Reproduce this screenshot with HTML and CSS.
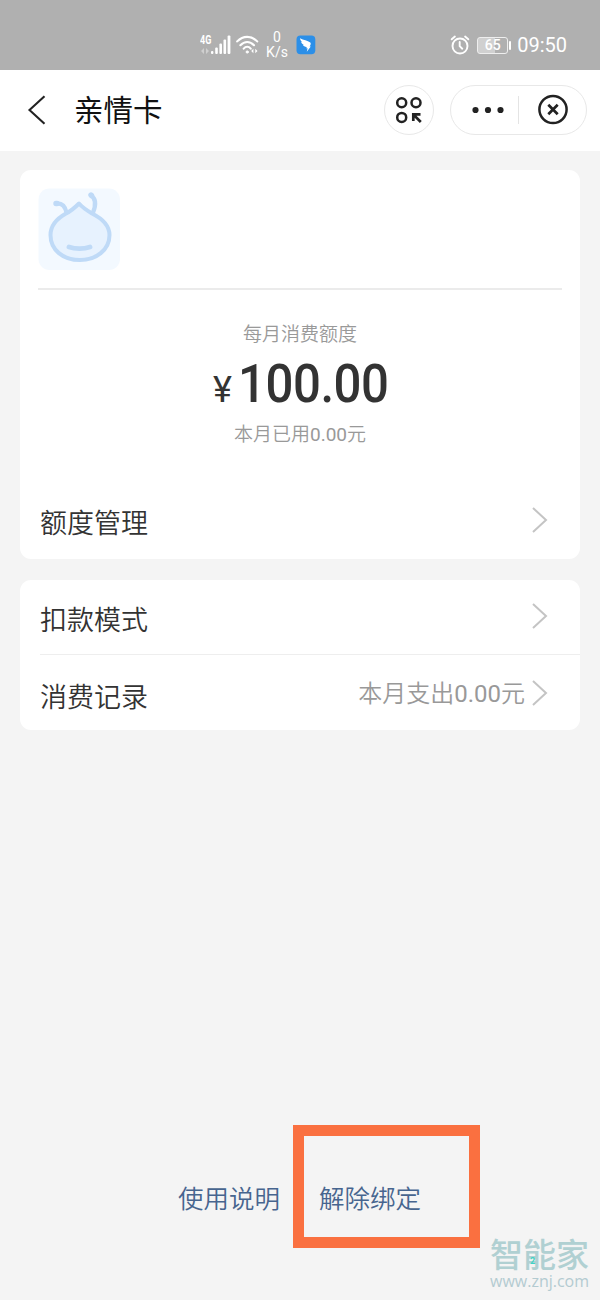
FILE: index.html
```html
<!DOCTYPE html>
<html lang="zh-CN">
<head>
<meta charset="utf-8">
<title>亲情卡</title>
<link rel="stylesheet" href="styles.css">
</head>
<body>
<div class="screen">
  <div class="status">
    <div class="status-left">
      <div class="network">
        <span class="gen">4G</span>
        <svg class="signal" width="31" height="20" viewBox="0 0 31 20" fill="#fff"><path opacity=".4" d="M1 16l3-3v6zM9 16l-3-3v6z"/><rect x="11" y="16" width="2.4" height="3" rx="1"/><rect x="15.2" y="12.5" width="2.6" height="6.5" rx="1"/><rect x="19.4" y="8.5" width="2.6" height="10.5" rx="1"/><rect x="23.5" y="4.5" width="2.6" height="14.5" rx="1"/><rect x="27.6" y="0.5" width="2.8" height="18.5" rx="1"/></svg>
      </div>
      <svg class="wifi" width="23" height="20" viewBox="0 0 23 20" fill="none" stroke="#fff" stroke-width="2.1" stroke-linecap="round"><path d="M1.2 6.4C7 .3 15.500 .3 21.200 6.400M4.400 10.200C8.500 5.900 14 5.900 18 10.200M7.700 13.600C9.800 11.200 12.600 11.200 14.700 13.600"/><circle cx="11.200" cy="17" r="1.100" fill="#fff" stroke-width="1"/><path d="M17.400 13.800v4.500l-2.200-2.200zM19.300 13.800v4.500l2.200-2.200z" fill="#fff" stroke="none"/></svg>
      <div class="speed"><span>0</span><span>K/s</span></div>
      <svg class="bird" width="20" height="20" viewBox="0 0 20 20"><rect x=".5" y=".5" width="18.800" height="18.800" rx="4" fill="#2c8fe8"/><path d="M4 3.200c3.500 1.800 7.500 2.200 10.300 4.200 1 1 .1 2.700-.7 4h1.200l-4 5.300.8-3.500h-1.500l.8-1.200c-2 .1-3.400-.8-4-2.200l1.200.1C6.200 9 5.300 8 5.200 6.700l1 .2C4.800 5.900 4.100 4.700 4 3.200z" fill="#fff"/></svg>
    </div>
    <div class="status-right">
      <svg width="20" height="20" viewBox="0 0 20 20" fill="none" stroke="#fff" stroke-width="1.900" stroke-linecap="round"><circle cx="10" cy="11" r="7.500"/><path d="M9.700 7v4.200l2.600 2.500M1.700 4.300l3.200-2.700M18.300 4.300l-3.200-2.700"/></svg>
      <div class="battery"><div class="cell">65</div><div class="tip"></div></div>
      <span class="time">09:50</span>
    </div>
  </div>

  <header class="nav">
    <svg class="back" width="20" height="32" viewBox="0 0 20 32" fill="none" stroke="#222" stroke-width="2.100"><path d="M18.500 2.200L3.500 16L18.500 29.800"/></svg>
    <h1>亲情卡</h1>
    <div class="round"><svg width="28" height="28" viewBox="0 0 28 28" fill="none" stroke="#222" stroke-width="2.500"><circle cx="6.700" cy="6.700" r="4.500"/><circle cx="21" cy="6.700" r="4.500"/><circle cx="6.700" cy="21.400" r="4.500"/><path stroke-width="2.700" d="M18.300 25V18.400H25.500M18.500 18.600L25.800 26"/></svg></div>
    <div class="capsule">
      <svg class="dots" width="34" height="8" viewBox="0 0 34 8" fill="#222"><circle cx="4.500" cy="4" r="3.100"/><circle cx="17" cy="4" r="3.100"/><circle cx="29.500" cy="4" r="3.100"/></svg>
      <i class="split"></i>
      <svg class="close" width="32" height="32" viewBox="0 0 32 32" fill="none" stroke="#222" stroke-width="2.500"><circle cx="16" cy="15.500" r="13.600"/><path stroke-width="2.700" d="M11.300 10.800l9.400 9.400M20.700 10.800l-9.400 9.400"/></svg>
    </div>
  </header>

  <main>
    <section class="card quota">
      <div class="owner">
        <svg width="82" height="82" viewBox="0 0 82 82" fill="none" stroke="#bfdaf7" stroke-linecap="round" stroke-linejoin="round"><rect x=".5" y=".5" width="81.500" height="81.500" rx="11" fill="#f3f9ff" stroke="none"/><path d="M41 15.500C45 20 49 22.500 54 25.500C65 31 71.500 38 71.500 47C71.500 62 58 72 42 72C25 72 12.500 62 12.500 47C12.500 37 19 30.500 28 25.500C33 23 37 19.500 41 15.500Z" fill="#e7f2fe" stroke-width="4"/><path d="M28.500 24.500C27 18 23.500 15 18.500 15.500" stroke-width="4.300"/><path d="M55 24.500C58 17 58 10.500 53 7.500" stroke-width="4.300"/><path d="M31 59C37 61 46 61 52 59" stroke-width="4.800"/><path d="M18 15.500h1M53 7l.5.500" stroke-width="5.400"/></svg>
      </div>
      <div class="summary">
        <div class="caption">每月消费额度</div>
        <div class="amount"><span class="yen">¥</span><span class="figure">100.00</span></div>
        <div class="caption used">本月已用<span class="num">0.00</span>元</div>
      </div>
      <div class="row">
        <span class="label">额度管理</span>
        <svg class="chevron" width="18" height="28" viewBox="0 0 18 28"><path d="M2 2L15 14L2 26"/></svg>
      </div>
    </section>
    <section class="card records">
      <div class="row">
        <span class="label">扣款模式</span>
        <svg class="chevron" width="18" height="28" viewBox="0 0 18 28"><path d="M2 2L15 14L2 26"/></svg>
      </div>
      <div class="row">
        <span class="label">消费记录</span>
        <span class="value">本月支出<span class="num">0.00</span>元</span>
        <svg class="chevron" width="18" height="28" viewBox="0 0 18 28"><path d="M2 2L15 14L2 26"/></svg>
      </div>
    </section>
  </main>

  <footer>
    <a class="link">使用说明</a>
    <div class="highlight"><a class="link">解除绑定</a></div>
  </footer>
  <div class="watermark"><div class="brand">智能家<i>2</i></div><div class="site">www.znj.com</div></div>
</div>
</body>
</html>
```
FILE: styles.css
```css
* { box-sizing: border-box; }
body { margin: 0; background: #f4f4f4; font-family: Roboto, "Noto Sans CJK SC", sans-serif; font-weight: 350; color: #333; }
svg { display: block; flex: none; }
.screen { position: relative; width: 600px; height: 1300px; display: flex; flex-direction: column; overflow: hidden; background: #f4f4f4; }

.status { height: 70px; flex: none; background: #b0b0b0; color: #fff; display: flex; justify-content: space-between; padding: 20px 33px 0 200px; }
.status-left, .status-right { display: flex; height: 50px; align-items: center; }
.network { position: relative; width: 31px; height: 20px; }
.gen { position: absolute; left: 0; top: -1px; font: 700 12px/12px Roboto, sans-serif; transform: scaleX(.75); transform-origin: left; }
.wifi { margin-left: 5px; }
.speed { width: 24px; margin-left: 6px; display: flex; flex-direction: column; align-items: center; font-size: 14px; font-weight: 400; line-height: 15px; }
.bird { margin-left: 7px; }
.battery { display: flex; align-items: center; gap: 1px; margin-left: 7px; }
.cell { width: 31px; height: 17px; border: 1.500px solid #eee; border-radius: 3px; background: linear-gradient(90deg, #d0d0d0 60%, #b0b0b0 60%); font-size: 14px; font-weight: 500; line-height: 15px; text-align: center; }
.tip { width: 2px; height: 9px; background: #fff; border-radius: 1px; }
.time { margin-left: 6px; font-size: 20px; font-weight: 400; line-height: 22px; }

.nav { height: 81px; flex: none; background: #fff; display: flex; align-items: center; padding: 0 13px 2px 26px; }
.nav h1 { margin: 0; width: 90px; margin-left: 28px; padding-top: 2px; font-size: 29.500px; font-weight: 400; line-height: 40px; color: #111; white-space: nowrap; }
.round { width: 50px; height: 50px; margin-left: 220px; border: 1px solid #e8e8e8; border-radius: 50%; display: flex; align-items: center; justify-content: center; }
.capsule { width: 137px; height: 50px; margin-left: 16px; border: 1px solid #e8e8e8; border-radius: 25px; display: flex; align-items: center; }
.dots { margin-left: 20px; }
.split { width: 1px; height: 28px; margin-left: 13px; background: #e4e4e4; }
.close { margin-left: 18px; }

main { padding: 19px 20px 0; display: flex; flex-direction: column; gap: 21px; }
.card { background: #fff; border-radius: 11px; }
.quota { height: 389px; }
.owner { height: 120px; margin: 0 18px; padding-top: 18px; border-bottom: 2px solid #ebebeb; }
.summary { height: 192px; display: flex; flex-direction: column; align-items: center; padding-top: 31px; }
.caption { font-size: 19px; line-height: 28px; color: #999; }
.amount { display: flex; height: 72px; align-items: baseline; color: #333; white-space: nowrap; }
.yen { width: 25px; font-size: 36px; font-weight: 400; }
.figure { width: 149px; font-size: 54px; font-weight: 500; line-height: 70px; letter-spacing: -.5px; transform: scaleX(.91); transform-origin: left; }
.row { height: 76px; display: flex; align-items: center; padding: 0 31px 0 20px; font-size: 27px; line-height: 40px; color: #333; }
.label { margin-right: auto; padding-top: 8px; }
.chevron { fill: none; stroke: #c4c4c4; stroke-width: 2; }
.value { font-size: 24px; color: #999; margin-right: 6px; padding-top: 2px; }
.num { font-weight: 400; }
.records { height: 150px; }
.records .row { height: 75px; padding-top: 1px; }
.records .label { padding-top: 10px; }
.records .row:first-child { height: 75px; padding-top: 0; padding-bottom: 2px; border-bottom: 1px solid #eee; margin-left: 20px; padding-left: 0; }

footer { margin-top: 395px; height: 123px; display: flex; align-items: center; padding-left: 178px; }
footer > .link { width: 115px; padding-top: 25px; }
.link { font-size: 25.500px; line-height: 36px; color: #47658f; white-space: nowrap; }
.highlight { width: 187px; height: 123px; border: 11px solid #fa7040; padding: 45px 0 0 15px; }
.watermark { position: absolute; left: 490px; top: 1240px; width: 106px; color: #b0d0d2; }
.brand { position: relative; font-size: 33px; font-weight: 500; line-height: 32px; white-space: nowrap; }
.brand i { position: absolute; left: 40px; top: 16px; font: 700 9px/10px Roboto, sans-serif; color: #3fd4c6; }
.site { font-family: "Open Sans", sans-serif; font-size: 16px; font-weight: 400; line-height: 18px; white-space: nowrap; color: #b3cbd1; }
```
